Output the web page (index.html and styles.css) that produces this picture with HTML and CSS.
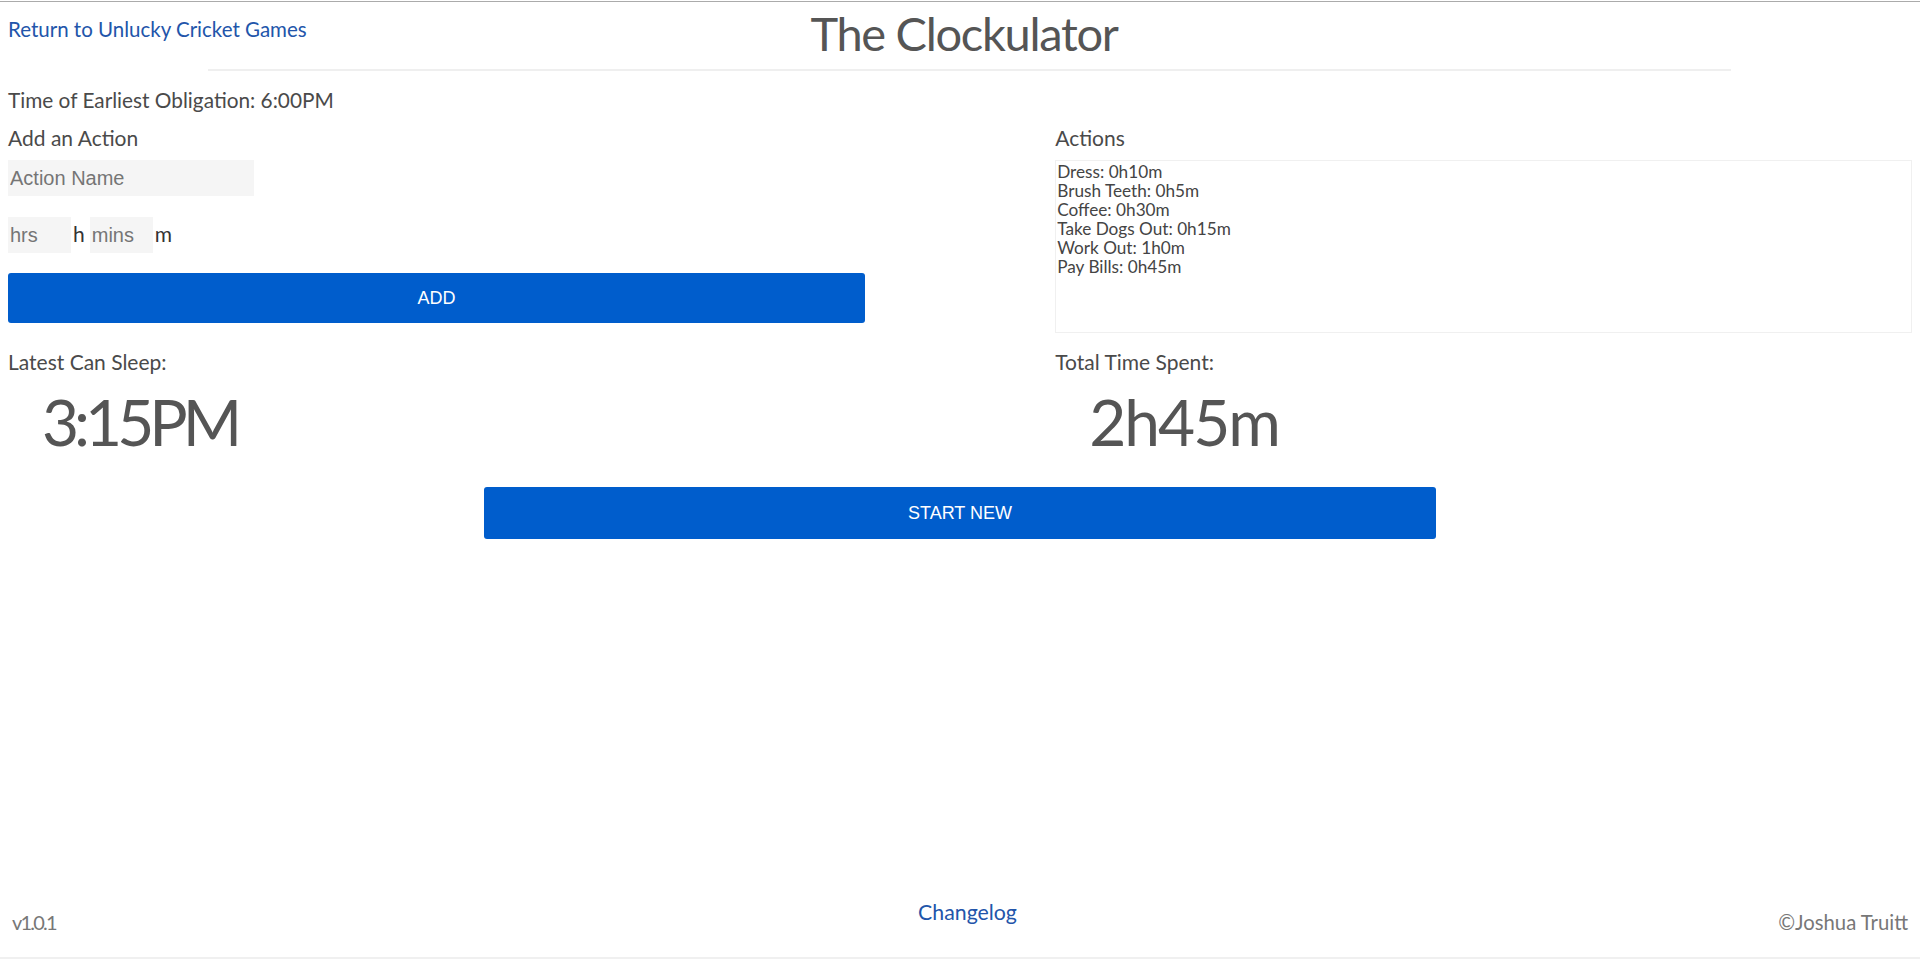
FILE: index.html
```html
<!DOCTYPE html>
<html lang="en">
<head>
<meta charset="utf-8">
<title>The Clockulator</title>
<link rel="stylesheet" href="styles.css">
</head>
<body>
<div class="page">
  <header class="header">
    <a class="back-link" href="#">Return to Unlucky Cricket Games</a>
    <h1 class="title">The Clockulator</h1>
    <span class="spacer"></span>
  </header>
  <hr class="rule">
  <p class="obligation">Time of Earliest Obligation: 6:00PM</p>
  <main class="grid">
    <section class="add">
      <div class="label">Add an Action</div>
      <input class="field name" type="text" placeholder="Action Name">
      <div class="duration">
        <input class="field small" type="text" placeholder="hrs"><span class="unit">h</span><input class="field small" type="text" placeholder="mins"><span class="unit">m</span>
      </div>
      <button class="btn add-btn" type="button">ADD</button>
    </section>
    <section class="actions">
      <div class="label">Actions</div>
      <div class="list">
        <div>Dress: 0h10m</div>
        <div>Brush Teeth: 0h5m</div>
        <div>Coffee: 0h30m</div>
        <div>Take Dogs Out: 0h15m</div>
        <div>Work Out: 1h0m</div>
        <div>Pay Bills: 0h45m</div>
      </div>
    </section>
    <section class="result">
      <div class="label">Latest Can Sleep:</div>
      <div class="big big-time">3:15PM</div>
    </section>
    <section class="result">
      <div class="label">Total Time Spent:</div>
      <div class="big big-total">2h45m</div>
    </section>
  </main>
  <div class="start-wrap"><button class="btn start-btn" type="button">START NEW</button></div>
  <footer class="footer">
    <span class="version">v1.0.1</span>
    <a class="changelog" href="#">Changelog</a>
    <span class="copy">©Joshua Truitt</span>
  </footer>
</div>
</body>
</html>
```
FILE: styles.css
```css
html, body {
  margin: 0;
  padding: 0;
  background: #fff;
}
body {
  padding-top: 1px;
  font-family: "Lato", "Noto Sans", sans-serif;
  color: #4a4a4a;
}
.page {
  border-top: 1px solid #ababab;
  min-height: 958px;
  box-sizing: border-box;
  padding: 0 8px;
  display: flex;
  flex-direction: column;
}
.header {
  display: grid;
  grid-template-columns: 1fr auto 1fr;
  align-items: start;
  padding-top: 3px;
}
.back-link {
  margin-top: 12px;
  font-size: 20.5px;
  line-height: 24px;
  color: #2255aa;
  text-decoration: none;
  justify-self: start;
}
.title {
  margin: 0 0 0 8px;
  font-family: "Lato", "Noto Sans", sans-serif;
  font-weight: 400;
  font-size: 47px;
  line-height: 56px;
  letter-spacing: -1.3px;
  color: #555;
}
.rule {
  border: 0;
  border-top: 2px solid #efefef;
  height: 0;
  width: 80%;
  margin: 8px 0 0 10.5%;
}
.obligation {
  margin: 17px 0 14px;
  font-size: 20.8px;
  line-height: 24px;
}
.grid {
  display: grid;
  grid-template-columns: 45% 45%;
  justify-content: space-between;
  row-gap: 17px;
}
.label {
  font-size: 21px;
  line-height: 24px;
  color: #4a4a4a;
}
.field {
  display: block;
  box-sizing: border-box;
  height: 36px;
  border: 0;
  background: #f5f5f5;
  padding: 0 2px;
  font-family: "Liberation Sans", Arial, sans-serif;
  font-size: 20px;
  color: #333;
  outline: none;
}
.field::placeholder {
  color: #757575;
}
.name {
  margin-top: 10px;
  width: 246px;
}
.duration {
  margin-top: 21px;
  display: flex;
  align-items: baseline;
}
.small {
  width: 63px;
}
.unit {
  font-size: 21px;
  line-height: 24px;
  color: #333;
  margin-left: 2px;
  margin-right: 5px;
}
.btn {
  display: block;
  border: 0;
  border-radius: 3px;
  background: #005dcc;
  color: #fff;
  font-family: "Liberation Sans", Arial, sans-serif;
  font-size: 18px;
  cursor: pointer;
}
.add-btn {
  margin-top: 20px;
  width: 100%;
  height: 50px;
}
.list {
  margin-top: 10px;
  height: 173px;
  box-sizing: border-box;
  border: 1px solid #f0f0f0;
  padding: 1px 1px 0;
  font-size: 17.2px;
  line-height: 19px;
  color: #444;
}
.big {
  margin-top: 16px;
  padding-left: 34px;
  font-size: 64px;
  line-height: 64px;
  color: #555;
}
.big-time {
  letter-spacing: -5px;
}
.big-total {
  letter-spacing: -2px;
}
.start-wrap {
  margin-top: 33px;
  display: flex;
  justify-content: center;
}
.start-btn {
  width: 50%;
  height: 52px;
}
.footer {
  margin-top: auto;
  display: grid;
  grid-template-columns: 1fr auto 1fr;
  align-items: end;
  padding: 0 12px 23px;
  border-bottom: 2px solid #f0f0f0;
  margin-left: -8px;
  margin-right: -8px;
}
.version {
  font-size: 20px;
  line-height: 24px;
  letter-spacing: -1.8px;
  color: #777;
  justify-self: start;
}
.changelog {
  font-size: 21.3px;
  line-height: 24px;
  color: #2255aa;
  text-decoration: none;
  margin-bottom: 10px;
  margin-left: 15px;
}
.copy {
  font-size: 20.3px;
  line-height: 24px;
  color: #777;
  justify-self: end;
}
```
